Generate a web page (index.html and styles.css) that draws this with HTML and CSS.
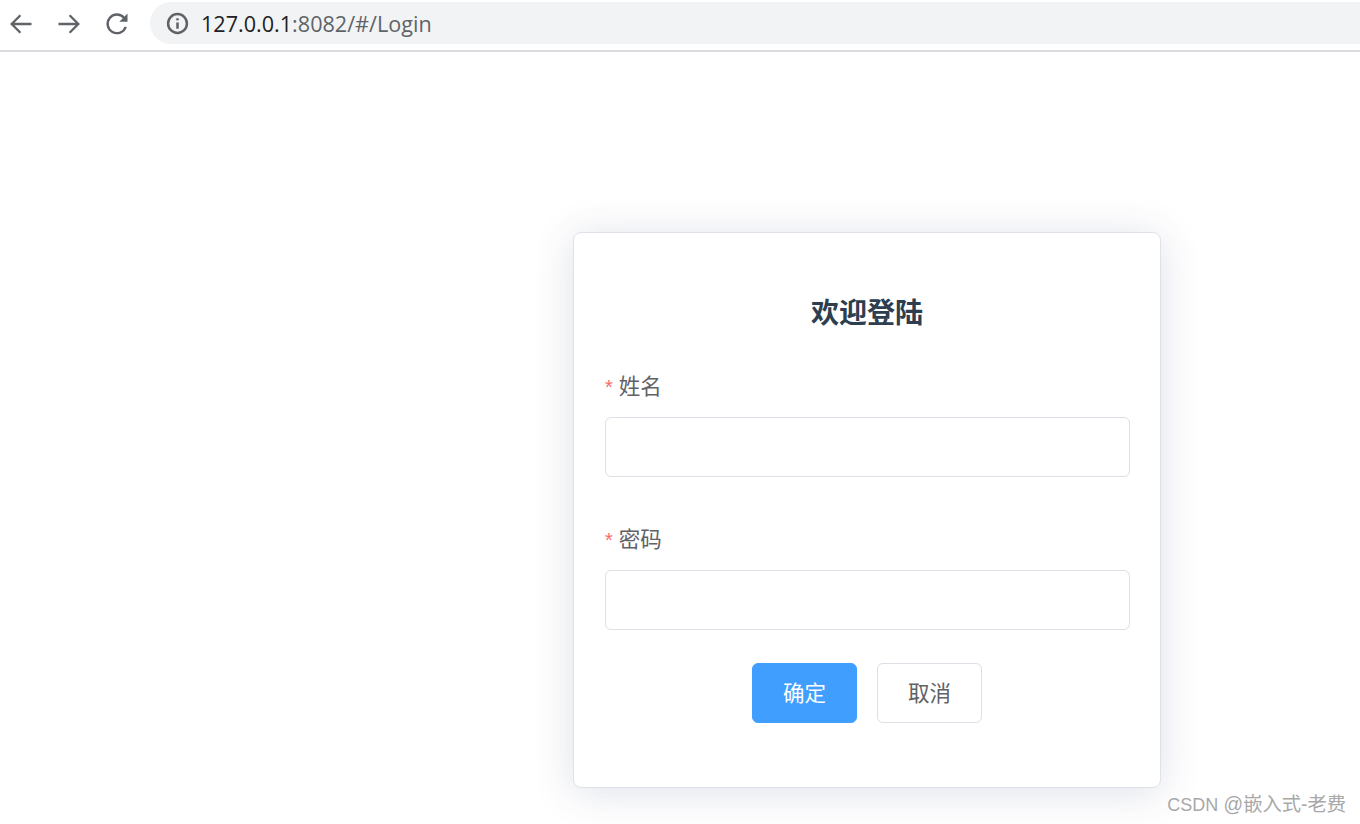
FILE: index.html
```html
<!DOCTYPE html>
<html lang="zh-CN">
<head>
  <meta charset="UTF-8" />
  <title>Login</title>
  <link rel="stylesheet" href="styles.css">
</head>
<body>
  <div class="toolbar">
    <div class="nav-btns">
      <svg class="nav-icon" viewBox="0 0 24 24"><path d="M21 12H4M11.5 4.5 4 12l7.5 7.5" /></svg>
      <svg class="nav-icon" viewBox="0 0 24 24"><path d="M3 12h17M12.5 4.5 20 12l-7.5 7.5" /></svg>
      <svg class="nav-icon" viewBox="0 0 24 24"><path d="M19.5 14.5A8 8 0 1 1 18 6.6" /><path class="solid" d="M21 3v7h-7z" /></svg>
    </div>
    <div class="address">
      <svg class="info-icon" viewBox="0 0 22 22">
        <circle cx="11" cy="11" r="9" />
        <path d="M11 10v6" />
        <path d="M11 6v2" />
      </svg>
      <span class="host">127.0.0.1</span><span class="path">:8082/#/Login</span>
    </div>
  </div>

  <div class="page">
    <form class="login-card">
      <h3 class="login-title">欢迎登陆</h3>

      <div class="form-item">
        <label class="form-label" for="username"><span class="required">*</span>姓名</label>
        <input class="form-input" type="text" id="username" />
      </div>

      <div class="form-item">
        <label class="form-label" for="password"><span class="required">*</span>密码</label>
        <input class="form-input" type="password" id="password" />
      </div>

      <div class="form-actions">
        <button class="btn btn-primary" type="button">确定</button>
        <button class="btn" type="button">取消</button>
      </div>
    </form>
  </div>

  <div class="watermark"><span class="watermark-brand">CSDN</span> @嵌入式-老费</div>
</body>
</html>
```

FILE: styles.css
```css
* {
  box-sizing: border-box;
  margin: 0;
  padding: 0;
}

html, body {
  height: 824px;
  overflow: hidden;
}

body {
  position: relative;
  background-color: #fff;
  font-family: "Liberation Sans", "Noto Sans CJK SC", sans-serif;
}

.toolbar {
  display: flex;
  align-items: flex-start;
  height: 52px;
  padding-top: 2px;
  border-bottom: 2px solid #dadce0;
}

.nav-btns {
  display: flex;
  gap: 20px;
  width: 150px;
  padding: 8px 0 0 7px;
}

.nav-icon {
  width: 28px;
  height: 28px;
  fill: none;
  stroke: #5f6368;
  stroke-width: 2;
}

.nav-icon .solid {
  fill: #5f6368;
  stroke: none;
}

.address {
  display: flex;
  align-items: center;
  flex: 1;
  height: 42px;
  padding-left: 16px;
  border-radius: 21px 0 0 21px;
  background-color: #f1f3f4;
  font-family: "Open Sans", sans-serif;
  font-size: 21.6px;
}

.info-icon {
  width: 23px;
  height: 23px;
  margin-right: 12px;
  fill: none;
  stroke: #5f6368;
  stroke-width: 2.4;
}

.host {
  color: #202124;
}

.path {
  color: #5f6368;
}

.page {
  padding: 180px 0 0 573px;
}

.login-card {
  width: 588px;
  height: 556px;
  padding: 63px 31px 0;
  background-color: #fff;
  border: 1px solid #e0e2e9;
  border-radius: 8px;
  box-shadow: 0 4px 40px rgba(50, 60, 110, 0.16);
}

.login-title {
  margin-bottom: 39px;
  color: #2c3e50;
  font-size: 28px;
  font-weight: 700;
  line-height: 36px;
  text-align: center;
}

.form-item {
  margin-bottom: 47px;
}

.form-label {
  display: block;
  height: 46px;
  color: #606266;
  font-size: 21.5px;
  line-height: 32px;
}

.required {
  margin-right: 6px;
  color: #f56c6c;
  font-size: 20px;
}

.form-input {
  display: block;
  width: calc(100% + 1px);
  height: 60px;
  border: 1px solid #dcdfe6;
  border-radius: 6px;
  background-color: #fff;
}

.form-actions {
  display: flex;
  justify-content: center;
  gap: 20px;
  margin-top: -14px;
}

.btn {
  width: 105px;
  height: 60px;
  padding-bottom: 4px;
  border: 1px solid #dcdfe6;
  border-radius: 6px;
  background-color: #fff;
  color: #606266;
  font-family: inherit;
  font-size: 21.5px;
}

.btn-primary {
  border-color: #409eff;
  background-color: #409eff;
  color: #fff;
}

.watermark {
  position: absolute;
  right: 14px;
  bottom: 6px;
  color: #a8a8a8;
  font-size: 19.3px;
  line-height: 26px;
}

.watermark-brand {
  font-size: 18px;
}
```
